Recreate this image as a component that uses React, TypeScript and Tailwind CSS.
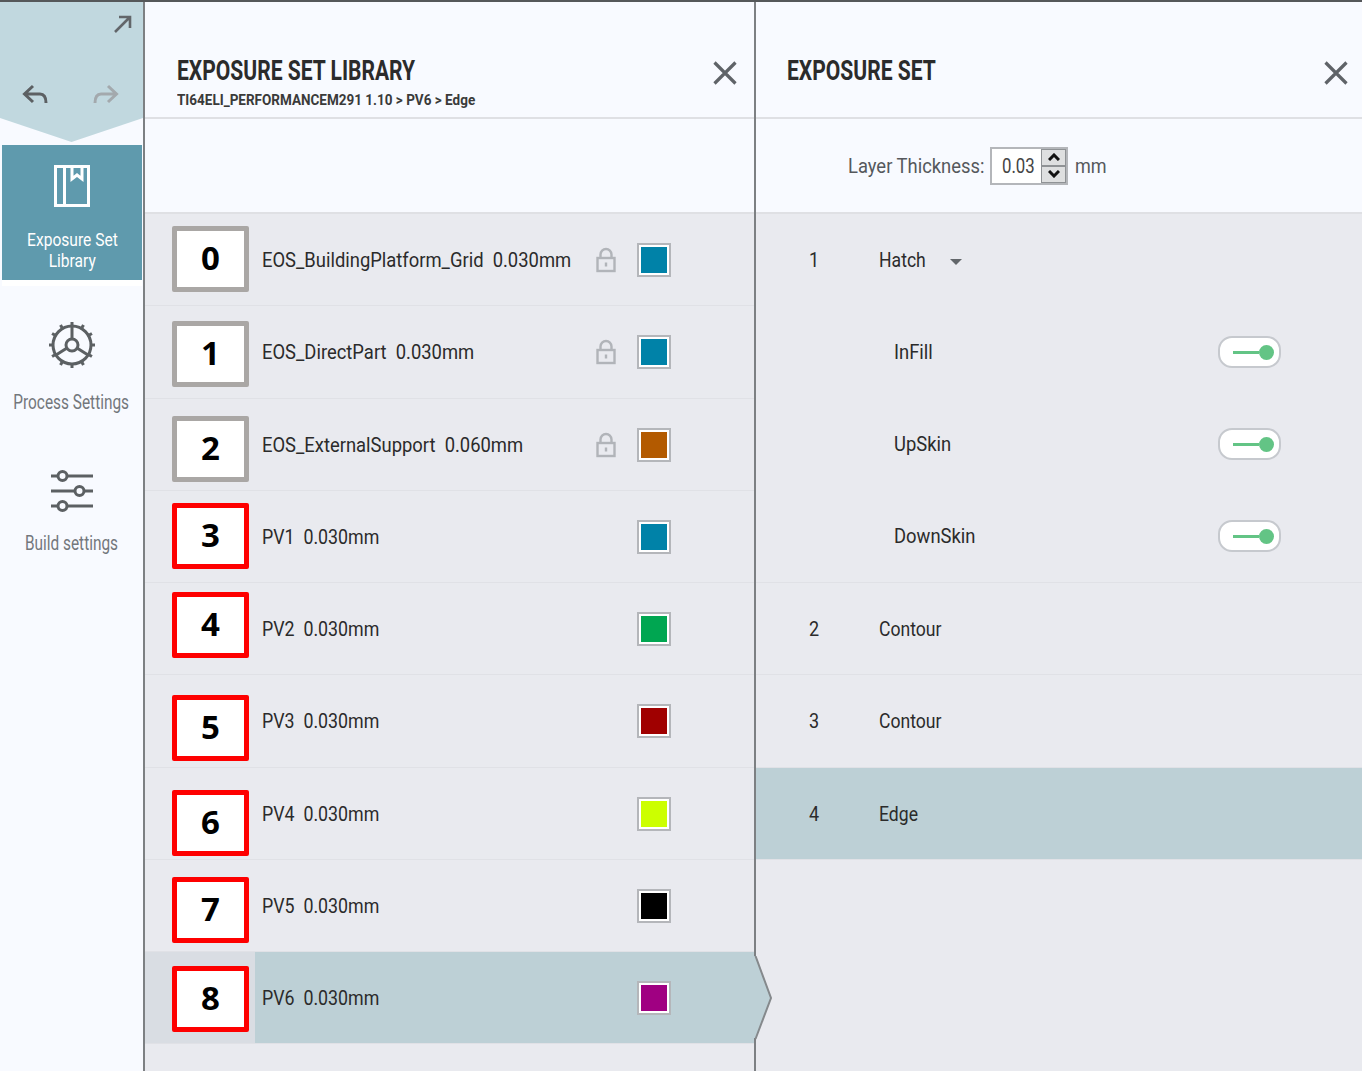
const font = "[font-family:Roboto,'Liberation_Sans',sans-serif]"

const sets = [
  { box: 0, name: 'EOS_BuildingPlatform_Grid', size: '0.030mm', color: 'bg-[#0082a8]', lock: true, h: 'h-[92px]', top: 'top-[12px]' },
  { box: 1, name: 'EOS_DirectPart', size: '0.030mm', color: 'bg-[#0082a8]', lock: true, h: 'h-[93px]', top: 'top-[15px]' },
  { box: 2, name: 'EOS_ExternalSupport', size: '0.060mm', color: 'bg-[#b35a00]', lock: true, h: 'h-[92px]', top: 'top-[17px]' },
  { box: 3, name: 'PV1', size: '0.030mm', color: 'bg-[#0082a8]', h: 'h-[92px]', top: 'top-[12px]' },
  { box: 4, name: 'PV2', size: '0.030mm', color: 'bg-[#00a651]', h: 'h-[92px]', top: 'top-[9px]' },
  { box: 5, name: 'PV3', size: '0.030mm', color: 'bg-[#a00000]', h: 'h-[93px]', top: 'top-[20px]' },
  { box: 6, name: 'PV4', size: '0.030mm', color: 'bg-[#ccff00]', h: 'h-[92px]', top: 'top-[22px]' },
  { box: 7, name: 'PV5', size: '0.030mm', color: 'bg-black', h: 'h-[92px]', top: 'top-[17px]' },
  { box: 8, name: 'PV6', size: '0.030mm', color: 'bg-[#a00082]', h: 'h-[92px]', top: 'top-[14px]', selected: true },
]

function Cond({ children, className }: { children: React.ReactNode; className: string }) {
  return <span className={`inline-block origin-left whitespace-nowrap ${className}`}>{children}</span>
}

function CloseIcon() {
  return (
    <svg width="26" height="26" viewBox="0 0 26 26" className="text-[#5f6368]">
      <path d="M2.5 2.5 L23.5 23.5 M23.5 2.5 L2.5 23.5" stroke="currentColor" strokeWidth="3.2" fill="none" />
    </svg>
  )
}

function GearIcon() {
  const teeth = [0, 30, 60, 90, 120, 150, 180, 210, 240, 270, 300, 330]
  return (
    <svg width="48" height="48" viewBox="0 0 48 48" fill="none" stroke="#5c6063" strokeWidth="3" className="mb-[3px]">
      <circle cx="24" cy="24" r="19" />
      <circle cx="24" cy="24" r="6" />
      <path d="M24 5 V18 M8 34 L19 27 M40 34 L29 27" />
      {teeth.map(a => (
        <path key={a} d="M24 1 V5" strokeWidth="3" transform={`rotate(${a} 24 24)`} />
      ))}
    </svg>
  )
}

function SlidersIcon() {
  return (
    <svg width="44" height="44" viewBox="0 0 44 44" fill="none" stroke="#5c6063" strokeWidth="3">
      <path d="M1 7 H8 M17 7 H43 M1 22 H25 M34 22 H43 M1 37 H8 M17 37 H43" />
      <circle cx="12.5" cy="7" r="4.5" />
      <circle cx="29.5" cy="22" r="4.5" />
      <circle cx="12.5" cy="37" r="4.5" />
    </svg>
  )
}

function Toggle() {
  return (
    <div className="w-[63px] h-[32px] rounded-[14px] bg-white border-2 border-[#c6c9ce] flex items-center justify-end pr-[5px]">
      <div className="w-[26px] h-[3px] bg-[#63c485]" />
      <div className="w-[15px] h-[15px] rounded-full bg-[#63c485]" />
    </div>
  )
}

function Swatch({ color }: { color: string }) {
  return (
    <div className="w-[34px] h-[34px] border-2 border-[#b4b6ba] bg-white p-[2px]">
      <div className={`w-full h-full ${color}`} />
    </div>
  )
}

function LockIcon() {
  return (
    <svg width="20" height="26" viewBox="0 0 20 26" fill="none" stroke="#b1b4b9" strokeWidth="2.4">
      <path d="M4.5 11 V7.5 a5.5 5.5 0 0 1 11 0 V11" />
      <rect x="1.5" y="11" width="17" height="13" />
      <rect x="8.8" y="15.5" width="2.4" height="4" fill="#b1b4b9" stroke="none" />
    </svg>
  )
}

function Row({ set }: { set: (typeof sets)[number] }) {
  return (
    <div className={`relative flex ${set.h} border-b border-[#e0e1e6] ${set.selected ? 'bg-[#d9dde3]' : ''}`}>
      <div className={`ml-[110px] flex-1 min-w-0 flex items-center pl-[7px] pr-[83px] ${set.selected ? 'bg-[#bdd0d6]' : ''}`}>
        <div className="flex-1 min-w-0 text-[20px] text-[#2b2b2b]">
          <Cond className={set.lock ? 'scale-x-[0.92]' : 'scale-x-[0.89]'}>{set.name}&nbsp; {set.size}</Cond>
        </div>
        {set.lock && (
          <div className="mr-[21px]">
            <LockIcon />
          </div>
        )}
        <Swatch color={set.color} />
      </div>
      {/* numbered marker boxes */}
      <div
        className={`absolute left-[27px] ${set.top} w-[77px] h-[66px] pb-[2px] bg-white border-[5px] rounded-[2px] flex items-center justify-center text-[33px] font-bold text-black [font-family:'Open_Sans',sans-serif] ${set.box < 3 ? 'border-[#aaa7a5]' : 'border-[#fe0000]'}`}
      >
        {set.box}
      </div>
    </div>
  )
}

function NavItem({ label, icon, gap }: { label: string; icon: React.ReactNode; gap: string }) {
  return (
    <div className="flex flex-col items-center">
      {icon}
      <div className={`text-[20px] leading-[24px] text-[#73777c] ${gap}`}>
        <span className="inline-block scale-x-[0.77] whitespace-nowrap">{label}</span>
      </div>
    </div>
  )
}

function Sidebar() {
  return (
    <aside className="w-[145px] shrink-0 border-r-2 border-[#7d8083] flex flex-col">
      <div className="h-[141px] shrink-0 bg-[#c1d8df] [clip-path:polygon(0_0,100%_0,100%_116px,50%_140px,0_116px)] pt-[12px] px-[10px]">
        <div className="flex justify-end">
          <svg width="20" height="20" viewBox="0 0 20 20" fill="none" stroke="#62666a" strokeWidth="2.6">
            <path d="M2 18 L17 3 M6 3 H17 V14" />
          </svg>
        </div>
        <div className="flex justify-between mt-[49px] pl-[12px] pr-[14px]">
          <svg width="26" height="24" viewBox="0 0 26 24" fill="none" stroke="#5c6063" strokeWidth="3">
            <path d="M11 3 L2.5 11 L11 19 M3 11 H18 Q24 11 24 20" />
          </svg>
          <svg width="26" height="24" viewBox="0 0 26 24" fill="none" stroke="#a3a9ad" strokeWidth="3">
            <path d="M15 3 L23.5 11 L15 19 M23 11 H8 Q2 11 2 20" />
          </svg>
        </div>
      </div>
      <div className="ml-[2px] mr-[1px] mt-[2px] h-[141px] shrink-0 bg-white">
        <div className="h-[135px] bg-[#5f9aad] flex flex-col items-center pt-[20px] text-white text-[18px] leading-[21px]">
          <svg width="36" height="44" viewBox="0 0 36 44" fill="none" stroke="white" strokeWidth="3" className="mb-[20px]">
            <rect x="1.5" y="1.5" width="33" height="39" />
            <path d="M10.5 1.5 V40.5 M18 1.5 V14 L23 10 L28 14 V1.5" />
          </svg>
          <span className="inline-block scale-x-[0.865] whitespace-nowrap">Exposure Set</span>
          <span className="inline-block scale-x-[0.865] whitespace-nowrap">Library</span>
        </div>
      </div>
      <div className="flex flex-col items-center mt-[35px] gap-[55px]">
        <NavItem label="Process Settings" icon={<GearIcon />} gap="mt-[18px]" />
        <NavItem label="Build settings" icon={<SlidersIcon />} gap="mt-[18px]" />
      </div>
    </aside>
  )
}

function LibraryPanel() {
  return (
    <section className="relative w-[611px] shrink-0 border-r-2 border-[#7d8083] flex flex-col">
      <header className="h-[117px] shrink-0 border-b-2 border-[#dfe0e4] pl-[32px] pr-[16px] flex items-start justify-between">
        <div className="pt-[53px]">
          <div className="text-[27px] leading-[32px] font-bold text-[#2b2b2b]">
            <Cond className="scale-x-[0.78]">EXPOSURE SET LIBRARY</Cond>
          </div>
          <div className="text-[15px] leading-[20px] font-bold text-[#3a3a3a] mt-[3px]">
            <Cond className="scale-x-[0.9]">TI64ELI_PERFORMANCEM291 1.10 &gt; PV6 &gt; Edge</Cond>
          </div>
        </div>
        <div className="pt-[58px]">
          <CloseIcon />
        </div>
      </header>
      <div className="h-[95px] shrink-0 border-b-2 border-[#dfe0e4]" />
      <div className="flex-1 bg-[#e9eaef]">
        {sets.map(s => (
          <Row key={s.box} set={s} />
        ))}
      </div>
      {/* arrow of selected row, sticks out into the next panel */}
      <svg width="19" height="84" viewBox="0 0 19 84" className="absolute left-[609px] top-[954px]">
        <polygon points="0,0 2,0 17,42 2,82 0,82" fill="#bdd0d6" />
        <path d="M1.5 0 L17 42 L1.5 83" fill="none" stroke="#85898c" strokeWidth="2" />
      </svg>
    </section>
  )
}

function Spinner() {
  return (
    <div className="flex h-[38px] w-[78px] border-2 border-[#b4b6ba] bg-white">
      <div className="flex-1 text-[20px] text-[#444] flex items-center pl-[10px]">
        <Cond className="scale-x-[0.84]">0.03</Cond>
      </div>
      <div className="w-[28px] bg-[#8f9295] flex flex-col gap-[2px] p-[1px]">
        <div className="flex-1 bg-[#dedfe0] flex items-center justify-center">
          <svg width="12" height="8" viewBox="0 0 12 8">
            <path d="M1 7 L6 2 L11 7" fill="none" stroke="#111" strokeWidth="3" />
          </svg>
        </div>
        <div className="flex-1 bg-[#dedfe0] flex items-center justify-center">
          <svg width="12" height="8" viewBox="0 0 12 8">
            <path d="M1 1 L6 6 L11 1" fill="none" stroke="#111" strokeWidth="3" />
          </svg>
        </div>
      </div>
    </div>
  )
}

function SubRow({ label }: { label: string }) {
  return (
    <div className="h-[92px] flex items-center pl-[138px] pr-[81px] justify-between text-[20px] text-[#2b2b2b]">
      <Cond className="scale-x-[0.92]">{label}</Cond>
      <Toggle />
    </div>
  )
}

function SetRow({ n, label, active, h }: { n: number; label: string; active?: boolean; h: string }) {
  return (
    <div className={`${h} flex items-center border-b border-[#e0e1e6] text-[20px] text-[#2b2b2b] ${active ? 'bg-[#bdd0d6]' : ''}`}>
      <div className="w-[123px] pl-[53px]">
        <Cond className="scale-x-[0.9]">{n}</Cond>
      </div>
      <Cond className="scale-x-[0.88]">{label}</Cond>
    </div>
  )
}

function ExposurePanel() {
  return (
    <section className="flex-1 flex flex-col">
      <header className="h-[117px] shrink-0 border-b-2 border-[#dfe0e4] pl-[31px] pr-[13px] flex items-start justify-between">
        <div className="pt-[53px] text-[27px] leading-[32px] font-bold text-[#2b2b2b]">
          <Cond className="scale-x-[0.78]">EXPOSURE SET</Cond>
        </div>
        <div className="pt-[58px]">
          <CloseIcon />
        </div>
      </header>
      <div className="h-[95px] shrink-0 border-b-2 border-[#dfe0e4] flex items-center pl-[92px] text-[20px] text-[#55585c]">
        <div className="w-[142px]">
          <Cond className="scale-x-[0.92]">Layer Thickness:</Cond>
        </div>
        <Spinner />
        <span className="ml-[7px]">
          <Cond className="scale-x-[0.9]">mm</Cond>
        </span>
      </div>
      <div className="flex-1 bg-[#e9eaef]">
        <div className="border-b border-[#e0e1e6]">
          <div className="h-[92px] flex items-center text-[20px] text-[#2b2b2b]">
            <div className="w-[123px] pl-[53px]">
              <Cond className="scale-x-[0.9]">1</Cond>
            </div>
            <Cond className="scale-x-[0.88]">Hatch</Cond>
            <svg width="12" height="6" viewBox="0 0 12 6" className="ml-[18px] mt-[3px]">
              <path d="M0 0 H12 L6 6 Z" fill="#62666a" />
            </svg>
          </div>
          <SubRow label="InFill" />
          <SubRow label="UpSkin" />
          <SubRow label="DownSkin" />
        </div>
        <SetRow n={2} label="Contour" h="h-[92px]" />
        <SetRow n={3} label="Contour" h="h-[93px]" />
        <SetRow n={4} label="Edge" h="h-[92px]" active />
      </div>
    </section>
  )
}

export default function App() {
  return (
    <div className={`w-[1362px] h-[1071px] overflow-hidden flex bg-[#f8faff] border-t-2 border-[#55585a] ${font}`}>
      <Sidebar />
      <LibraryPanel />
      <ExposurePanel />
    </div>
  )
}
